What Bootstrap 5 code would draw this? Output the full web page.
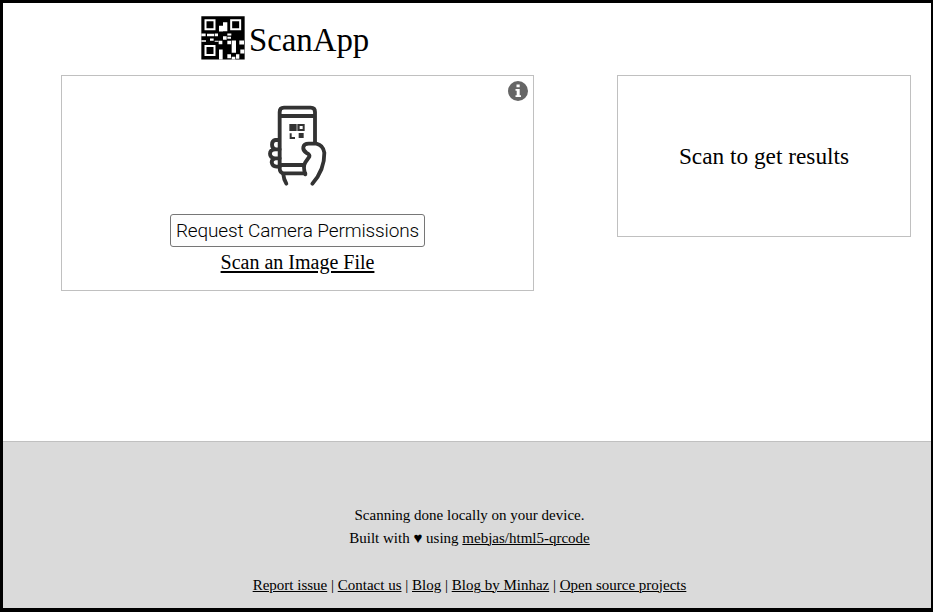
<!DOCTYPE html>
<html lang="en">
<head>
<meta charset="utf-8">
<meta name="viewport" content="width=device-width, initial-scale=1">
<title>ScanApp</title>
<link href="https://cdn.jsdelivr.net/npm/bootstrap@5.3.0/dist/css/bootstrap.min.css" rel="stylesheet">
<style>
body{font-family:"Liberation Serif",serif;color:#000;background:#fff}
.app-frame{height:612px;border:solid #000;border-width:3px 2px 4px 3px}
.scan-area{height:438px;padding:0 20px 0 58px}
.scan-col{width:473px}
.brand-row{height:72px;padding:13px 0 0 140px;gap:4px}
.brand-row svg{width:44px;height:44px}
.brand-name{font-size:32.8px;line-height:49px;font-weight:400}
.panel{border:1px solid silver}
.scanner{height:216px}
.phone{width:90px;height:100px;margin:19px 0 0 4px}
.info{top:4px;right:4px;width:22px;height:22px}
.ask{width:255px;height:33px;margin-top:19px;border:1px solid #767676;border-radius:3px;background:#fdfdfd;color:#000;font:300 19px/31px Roboto,sans-serif;letter-spacing:-.12px;white-space:nowrap}
.file-link{font-size:20px;line-height:24px;margin-top:3px;text-decoration-thickness:2px;text-underline-offset:2px}
.result{width:294px;height:162px;margin-top:72px;font-size:23.3px}
.foot{background:#dadada;border-top:1px solid silver;font-size:15px;line-height:23px;padding:62px 0 0 5px}
.foot a,.file-link{color:#000}
.foot a{text-underline-offset:1px;text-decoration-thickness:1px}
.links{margin-top:24px}
</style>
</head>
<body>
<div class="app-frame d-flex flex-column overflow-hidden">
<main class="scan-area d-flex justify-content-between align-items-start flex-shrink-0">
<section class="scan-col">
<header class="brand-row d-flex align-items-start">
<svg viewBox="19 24 132 131" aria-hidden="true">
<path fill="#000" d="M20 24H150V154H20z"/>
<path fill="none" stroke="#fff" stroke-width="6" d="M32.5 36.5H59.5V63.5H32.5zM109.5 36.5H136.5V63.5H109.5zM32.5 113.5H59.5V140.5H32.5z"/>
<path fill="#fff" d="M85 42H98V69H85zM73 53H85V70H73zM20 76H33V84H20zM37 77H58V84H37zM20 96H34V101H20zM60 76H70V84H60zM46 91H57V98H46zM60 98H71V101H60zM85 84H96V95H85zM98 76H110V82H98zM72 98H83V108H72zM98 98H109V108H98zM111 97H124V110H111zM111 110H124V134H111zM98 86H109V92H98zM134 97H148V109H134zM73 124H84V154H73zM98 138H109V150H98zM124 138H134V152H124zM137 124H149V136H137zM111 146H122V154H111z"/>
</svg>
<h1 class="brand-name m-0">ScanApp</h1>
</header>
<div class="panel scanner position-relative d-flex flex-column align-items-center">
<svg class="info position-absolute" viewBox="0 0 22 22" aria-hidden="true"><circle cx="11" cy="11" r="10" fill="#666"/><path fill="#fff" d="M9.5 4.5H12.7V7.2H9.5zM8.5 9H12.7V15.3H14V17H8.5V15.3H9.7V10.7H8.5z"/></svg>
<svg class="phone flex-shrink-0" viewBox="0 0 270 300" fill="none" stroke="#333" stroke-width="11.5" stroke-linecap="round" stroke-linejoin="round" aria-hidden="true">
<path d="M74 220V51Q74 38 87 38H167Q180 38 180 51V143M74 63H180M74 210H147M74 220Q74 235 87 235H151"/>
<path d="M71 135H61Q51 137 51 149Q51 160 61 163H74M60 163Q45 164 45 176Q45 188 60 190H74M61 190Q50 192 50 202Q52 215 64 215H74"/>
<path d="M85 238Q86 252 94 266M151 238Q143 214 151 202L163 185Q165 179 155 174Q143 167 145 156Q147 146 161 146H184Q205 151 208 173Q209 224 172 266"/>
<g stroke="none" fill="#333"><path d="M103 87H125V108H103zM131 114H146V129H131zM104 115H110V126H120V132H104z"/><path fill-rule="evenodd" d="M127 87H149V108H127zM134 93V102H143V93z"/></g>
</svg>
<button class="ask p-0" type="button">Request Camera Permissions</button>
<a class="file-link" href="#">Scan an Image File</a>
</div>
</section>
<section class="panel result d-flex align-items-center justify-content-center">Scan to get results</section>
</main>
<footer class="foot flex-grow-1 text-center">
<div class="foot-note">Scanning done locally on your device.</div>
<div class="foot-note">Built with ♥ using <a href="#">mebjas/html5-qrcode</a></div>
<nav class="links"><a href="#">Report issue</a> | <a href="#">Contact us</a> | <a href="#">Blog</a> | <a href="#">Blog by Minhaz</a> | <a href="#">Open source projects</a></nav>
</footer>
</div>
<script src="https://cdn.jsdelivr.net/npm/bootstrap@5.3.0/dist/js/bootstrap.bundle.min.js"></script>
</body>
</html>
